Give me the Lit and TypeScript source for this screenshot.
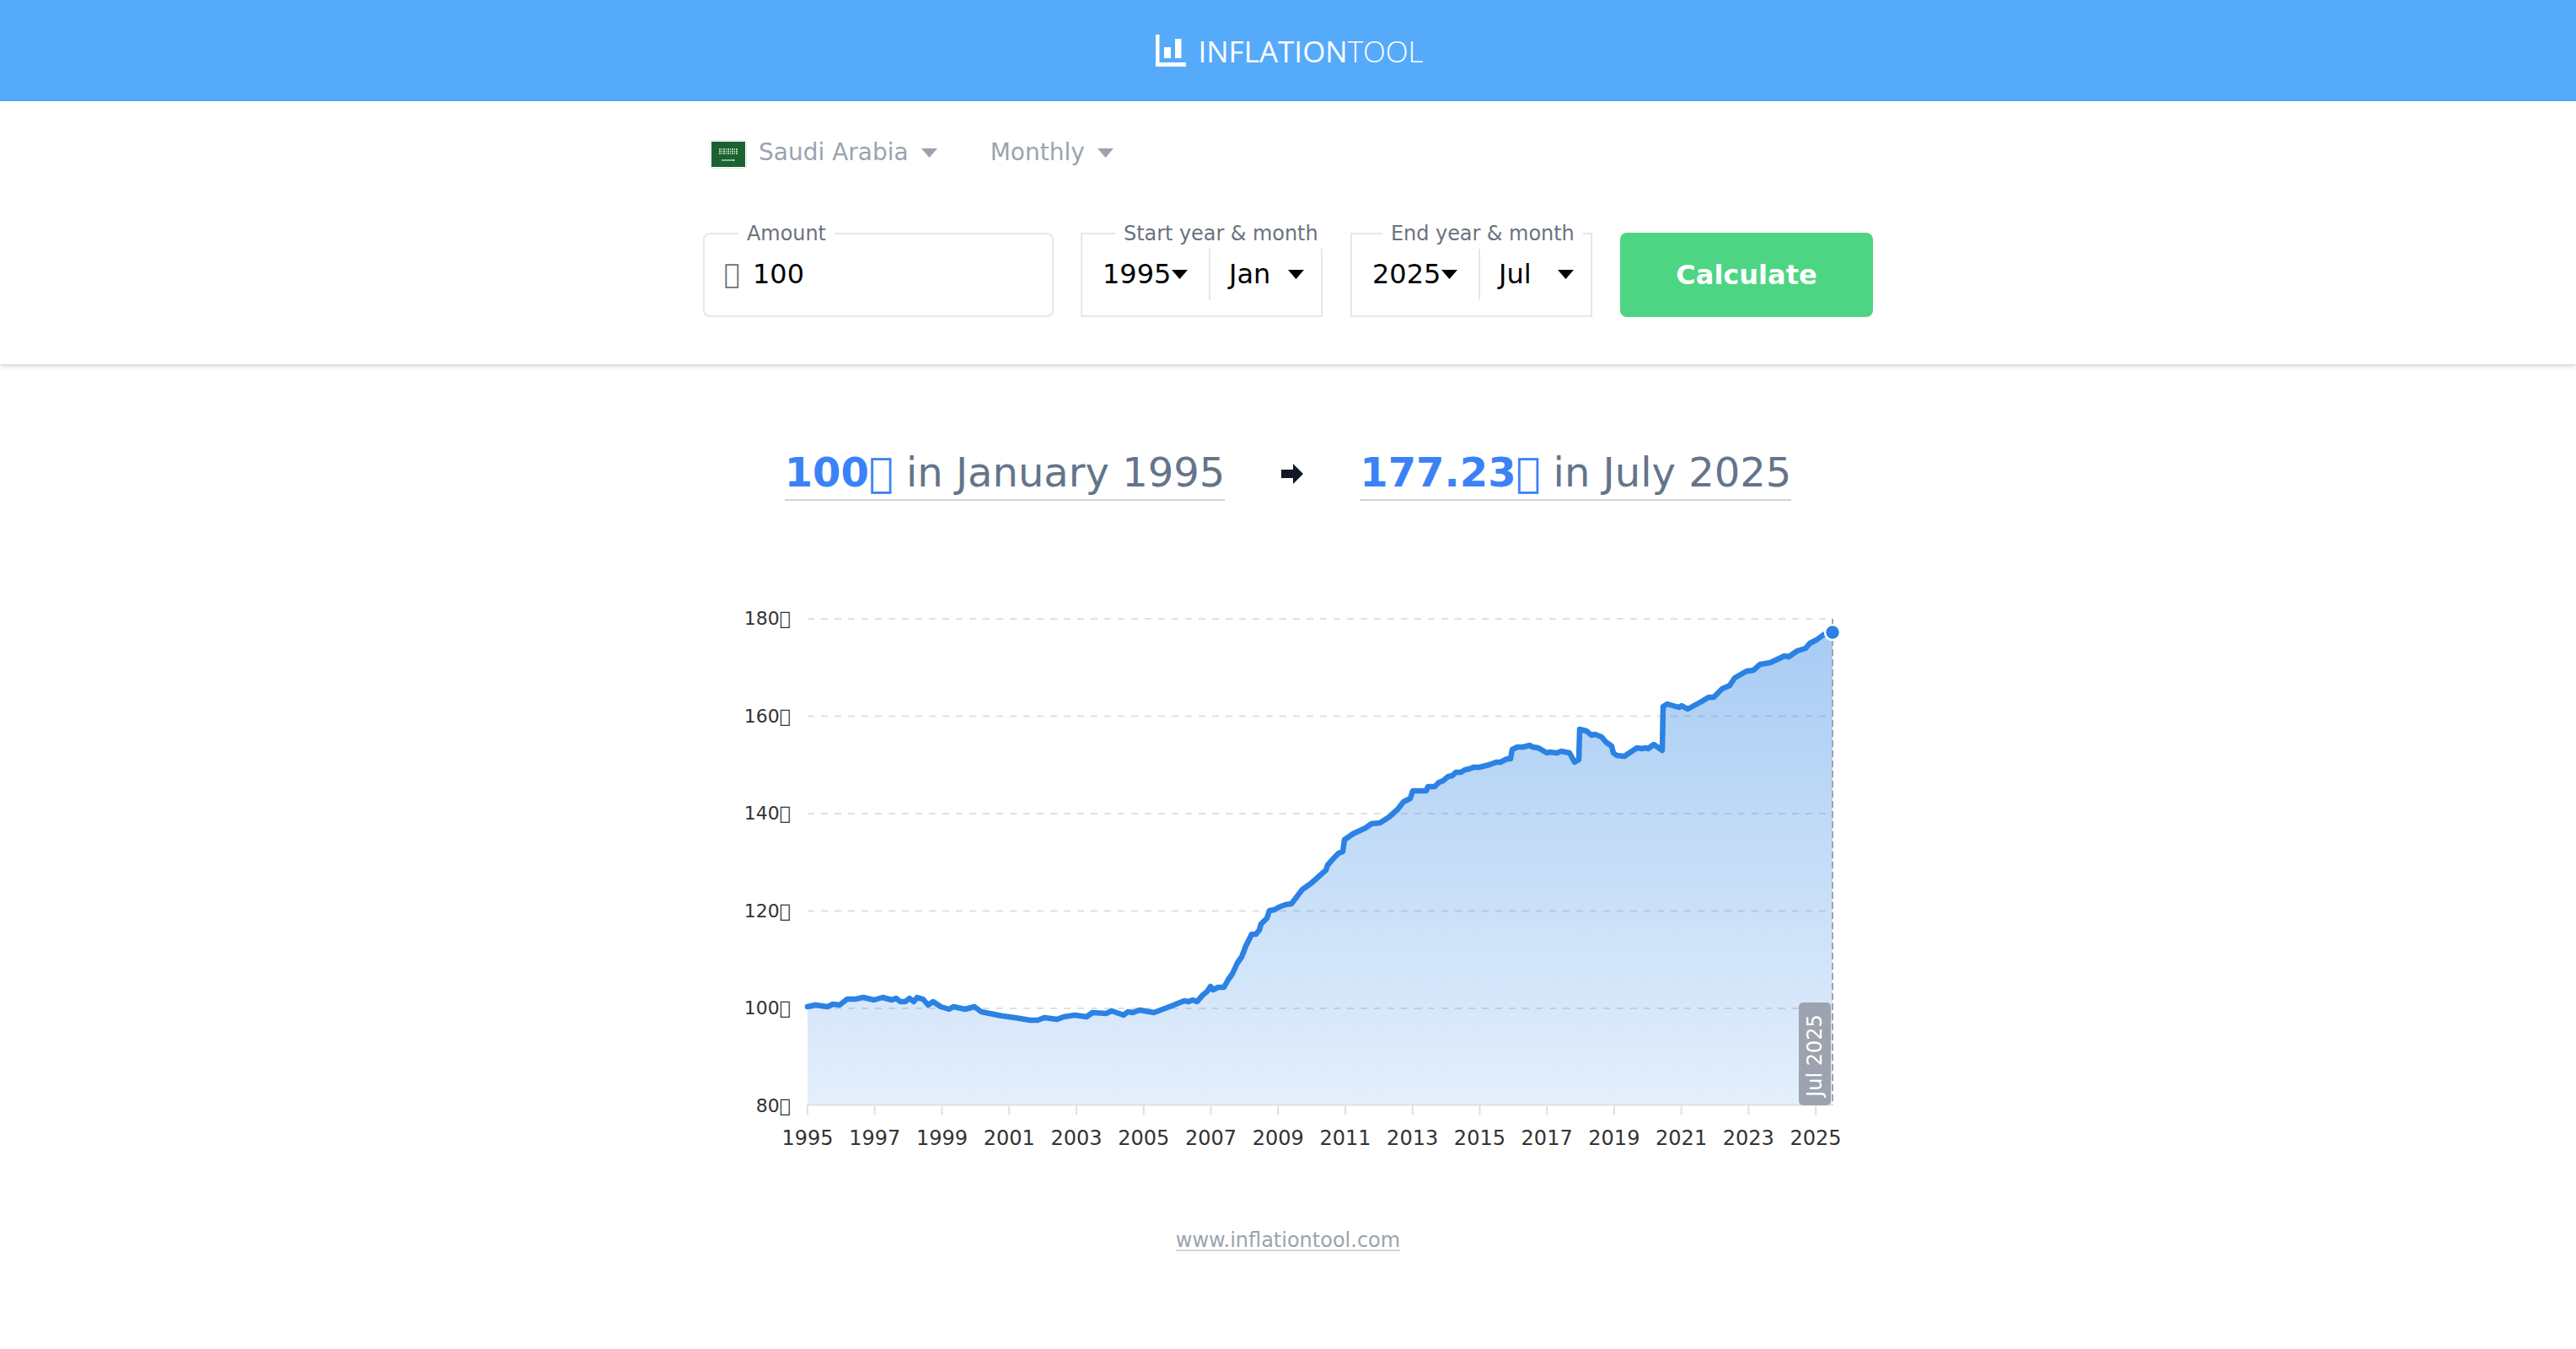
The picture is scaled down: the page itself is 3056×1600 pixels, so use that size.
import { LitElement, html, css, svg } from "lit";
import { customElement } from "lit/decorators.js";

const RIYAL = "\uE900";

const PTS: [number, number][] = [
  [958,1194],[967,1192],[982,1194],[988,1191],[996,1192],[1005,1185],[1015,1185],[1024,1183],[1037,1186],[1047,1183],[1058,1186],[1063,1184],[1068,1188],[1074,1188],[1079,1184],[1084,1188],[1088,1183],[1095,1185],[1101,1192],[1107,1188],[1116,1194],[1126,1197],[1131,1194],[1145,1197],[1156,1194],[1164,1200],[1174,1202],[1189,1205],[1204,1207],[1222,1210],[1231,1210],[1239,1207],[1254,1209],[1262,1206],[1275,1204],[1289,1206],[1296,1201],[1312,1202],[1319,1199],[1333,1204],[1338,1200],[1344,1201],[1352,1198],[1369,1201],[1390,1193],[1400,1189],[1405,1187],[1410,1188],[1415,1186],[1420,1188],[1427,1180],[1432,1176],[1436,1170],[1439,1174],[1445,1171],[1452,1171],[1457,1162],[1462,1155],[1468,1142],[1473,1135],[1478,1122],[1485,1108],[1490,1108],[1494,1103],[1496,1096],[1503,1089],[1506,1080],[1512,1079],[1517,1076],[1525,1073],[1532,1072],[1545,1055],[1555,1048],[1573,1032],[1575,1026],[1583,1017],[1588,1012],[1593,1010],[1595,996],[1605,989],[1620,982],[1627,977],[1637,976],[1648,969],[1658,960],[1665,951],[1673,947],[1676,938],[1692,938],[1694,933],[1702,933],[1707,928],[1712,926],[1718,921],[1723,920],[1727,916],[1733,916],[1738,913],[1743,912],[1748,910],[1755,910],[1767,907],[1775,904],[1780,904],[1788,900],[1792,900],[1794,889],[1800,886],[1807,886],[1815,884],[1818,886],[1825,887],[1835,893],[1838,892],[1847,893],[1852,891],[1862,893],[1868,904],[1873,901],[1874,865],[1882,867],[1888,872],[1892,871],[1900,874],[1905,880],[1912,885],[1914,893],[1918,896],[1927,897],[1933,893],[1942,887],[1948,888],[1952,887],[1955,888],[1962,883],[1972,890],[1973,838],[1978,835],[1985,837],[1992,839],[1995,837],[2002,841],[2017,833],[2027,827],[2033,827],[2043,817],[2052,813],[2058,804],[2072,796],[2080,795],[2088,788],[2100,786],[2117,778],[2122,779],[2132,772],[2142,769],[2147,763],[2155,759],[2163,753],[2174,750],
];

const X0 = 958, X1 = 2174, Y0 = 1310.5, STEP_Y = 115.5, STEP_X = 79.74;
const GRID = [180, 160, 140, 120, 100, 80];
const YEARS = Array.from({ length: 16 }, (_, i) => 1995 + i * 2);

const linePath = "M" + PTS.map((p) => p.join(" ")).join("L");
const areaPath = `${linePath}L${X1} ${Y0}L${X0} ${Y0}Z`;

@customElement("app-root")
export class AppRoot extends LitElement {
  static styles = css`
    :host { display: block; font-family: "DejaVu Sans", sans-serif; background: #fff; min-height: 1600px; }
    .top { height: 120px; background: #56aafa; display: flex; align-items: center; justify-content: center; }
    .logo { display: flex; align-items: center; gap: 14px; color: #fff; font-family: "Open Sans", sans-serif; font-size: 35px; line-height: 1; margin-left: 4px; }
    .logo svg { display: block; }
    .logo b { font-weight: 500; }
    .logo span { font-weight: 300; }
    .bar { height: 312px; box-sizing: border-box; padding-top: 40px; box-shadow: 0 2px 6px rgba(0,0,0,.12), 0 2px 4px rgba(0,0,0,.08); }
    .wrap { width: 1388px; margin: 0 auto; }
    .pickers { display: flex; align-items: center; height: 40px; padding-left: 8px; font-size: 28px; color: #9ca3af; }
    .pick { display: flex; align-items: center; }
    .pick + .pick { margin-left: 63px; }
    .flag { display: block; margin: 6px 14px 0 0; }
    .caret { display: block; margin-left: 15px; margin-top: 3px; }
    .form { display: flex; gap: 33px; margin-top: 76px; }
    .box { position: relative; box-sizing: border-box; height: 100px; border: 2px solid #e5e7eb; display: flex; }
    .amount { width: 415.5px; margin-right: -0.5px; border-radius: 8px; padding: 16px 23px 0; align-items: flex-start; }
    .dates { width: 287px; padding-top: 16px; }
    .legend { position: absolute; top: -19px; left: 39px; padding: 0 10px; background: #fff; color: #6b7280; font-size: 24px; letter-spacing: -0.06px; line-height: 36px; white-space: nowrap; }
    .amount .legend { left: 40px; }
    .end .legend { left: 36px; }
    .cur { font-size: 32px; line-height: 62px; color: #6b7280; width: 34px; flex: none; }
    .val { font-size: 32px; line-height: 62px; color: #000; }
    .sel { display: flex; align-items: center; height: 62px; font-size: 32px; color: #000; }
    .sel svg { display: block; }
    .yr { width: 152px; padding-left: 24px; box-sizing: border-box; border-right: 2px solid #e5e7eb; }
    .yr svg { margin-left: 1px; }
    .mo { flex: 1; padding-left: 22px; justify-content: space-between; padding-right: 20px; box-sizing: border-box; }
    .calc { width: 300px; height: 100px; background: #4dd583; color: #fff; font-size: 32px; font-weight: 700; border-radius: 8px; display: flex; align-items: center; justify-content: center; }
    .result { display: flex; justify-content: center; align-items: center; margin-top: 98px; font-size: 48px; color: #64748b; line-height: 60px; }
    .phrase { border-bottom: 2px solid #cbd5e1; padding-bottom: 2px; white-space: nowrap; }
    .phrase b { color: #3b82f6; font-weight: 700; }
    .arrow { display: block; margin: 0 67px; }
    .chart { display: block; margin-top: 66px; }
    .chart .ylab { font: 22px "DejaVu Sans", sans-serif; fill: #333; text-anchor: end; }
    .chart .xlab { font: 24px "DejaVu Sans", sans-serif; fill: #333; text-anchor: middle; }
    .chart .tip { font: 24px "DejaVu Sans", sans-serif; fill: #fff; text-anchor: middle; }
    .foot { display: flex; justify-content: center; margin-top: 77px; }
    .foot a { color: #9ca3af; font-size: 24px; line-height: 29px; text-decoration: underline; text-decoration-color: #d1d5db; text-decoration-thickness: 2px; text-underline-offset: 3px; }
  `;

  private caret(color: string) {
    return html`<svg class="caret" width="19" height="11" viewBox="0 0 19 11"><path d="M0 0H19L9.5 11Z" fill=${color}></path></svg>`;
  }

  private blackCaret() {
    return html`<svg width="19" height="11" viewBox="0 0 19 11"><path d="M0 0H19L9.5 11Z" fill="#000"></path></svg>`;
  }

  private flag() {
    return html`<svg class="flag" width="44" height="34" viewBox="0 0 44 34">
      <rect x="0.5" y="0.5" width="43" height="33" rx="3" fill="#fff" stroke="#e5e7eb"></rect>
      <rect x="2" y="2" width="40" height="30" fill="#1a6331"></rect>
      <path d="M11 11h22M11 13.5h22M11 16h22" stroke="#dfeee3" stroke-width="1.5" stroke-dasharray="2 1 1 1"></path>
      <path d="M14 24h15" stroke="#fff" stroke-width="1"></path>
      <path d="M28 23l2 1-2 1z" fill="#fff"></path>
    </svg>`;
  }

  private chart() {
    return html`<svg class="chart" width="1388" height="720" viewBox="834 660 1388 720">
      <defs>
        <linearGradient id="fill" gradientUnits="userSpaceOnUse" x1="0" y1="750" x2="0" y2="1310">
          <stop offset="0" stop-color="#2b82e4" stop-opacity="0.41"></stop>
          <stop offset="1" stop-color="#2b82e4" stop-opacity="0.13"></stop>
        </linearGradient>
      </defs>
      ${GRID.slice(0, 5).map((_, i) => svg`<line x1=${X0} x2=${X1} y1=${734 + i * STEP_Y} y2=${734 + i * STEP_Y} stroke="#e0e0e0" stroke-width="2" stroke-dasharray="8 8"></line>`)}
      <path d=${areaPath} fill="url(#fill)"></path>
      <line x1=${X0} x2=${X1} y1=${Y0} y2=${Y0} stroke="#e0e0e6" stroke-width="2"></line>
      ${YEARS.map((y, i) => svg`<line x1=${X0 + i * STEP_X} x2=${X0 + i * STEP_X} y1=${Y0} y2=${Y0 + 12} stroke="#e0e0e6" stroke-width="2"></line>
        <text class="xlab" x=${X0 + i * STEP_X} y="1358">${y}</text>`)}
      ${GRID.map((v, i) => svg`<text class="ylab" x="938" y=${734 + i * STEP_Y + 7}>${v}${RIYAL}</text>`)}
      <line x1=${X1} x2=${X1} y1="734" y2=${Y0} stroke="#9ca3af" stroke-width="2" stroke-dasharray="8 4"></line>
      <path d=${linePath} fill="none" stroke="#2b82e4" stroke-width="6.5" stroke-linejoin="round" stroke-linecap="round"></path>
      <circle cx=${X1} cy="750" r="9" fill="#2b82e4" stroke="#fff" stroke-width="2.5"></circle>
      <rect x="2134" y="1189" width="38" height="122" rx="5" fill="#9ca3af"></rect>
      <text class="tip" transform="translate(2161 1252) rotate(-90)">Jul 2025</text>
    </svg>`;
  }

  render() {
    return html`
      <div class="top">
        <div class="logo">
          <svg width="36" height="38" viewBox="0 0 36 38">
            <path d="M0 0H4.5V33H36V38H0Z" fill="#fff"></path>
            <rect x="10" y="15" width="8" height="13" fill="#fff"></rect>
            <rect x="23" y="5" width="7.5" height="23" fill="#fff"></rect>
          </svg>
          <div><b>INFLATION</b><span>TOOL</span></div>
        </div>
      </div>
      <div class="bar">
        <div class="wrap">
          <div class="pickers">
            <div class="pick">${this.flag()}Saudi Arabia${this.caret("#9ca3af")}</div>
            <div class="pick">Monthly${this.caret("#9ca3af")}</div>
          </div>
          <div class="form">
            <div class="box amount">
              <div class="legend">Amount</div>
              <div class="cur">${RIYAL}</div>
              <div class="val">100</div>
            </div>
            <div class="box dates">
              <div class="legend">Start year &amp; month</div>
              <div class="sel yr">1995${this.blackCaret()}</div>
              <div class="sel mo">Jan${this.blackCaret()}</div>
            </div>
            <div class="box dates end">
              <div class="legend">End year &amp; month</div>
              <div class="sel yr">2025${this.blackCaret()}</div>
              <div class="sel mo">Jul${this.blackCaret()}</div>
            </div>
            <div class="calc">Calculate</div>
          </div>
        </div>
      </div>
      <div class="result">
        <div class="phrase"><b>100${RIYAL}</b> in January 1995</div>
        <svg class="arrow" width="26" height="24" viewBox="0 0 26 24"><path d="M0 7H14V0L26 12L14 24V17H0Z" fill="#111827"></path></svg>
        <div class="phrase"><b>177.23${RIYAL}</b> in July 2025</div>
      </div>
      <div class="wrap">${this.chart()}</div>
      <div class="foot"><a>www.inflationtool.com</a></div>
    `;
  }
}
